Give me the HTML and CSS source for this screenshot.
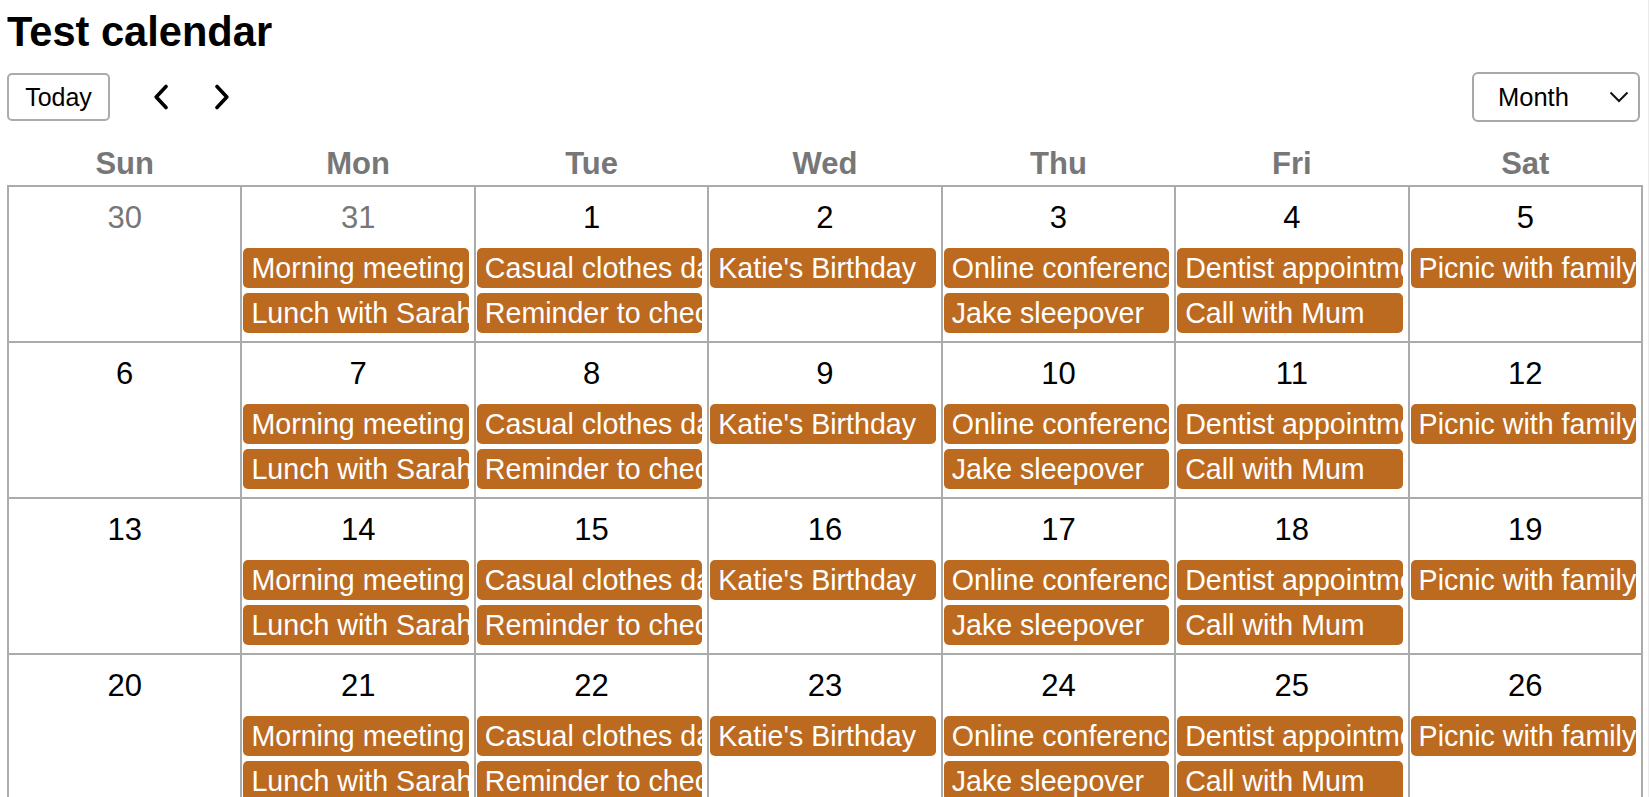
FILE: index.html
```html
<!DOCTYPE html>
<html lang="en">
<head>
<meta charset="utf-8">
<title>Test calendar</title>
<link rel="stylesheet" href="styles.css">
</head>
<body>
<div class="page">
  <h1 class="title">Test calendar</h1>
  <div class="toolbar">
    <div class="toolbar-left">
      <button class="today-btn">Today</button>
      <button class="nav-btn nav-prev" aria-label="Previous">
        <svg width="16" height="26" viewBox="0 0 16 26"><path d="M13 2.5 L3.2 13 L13 23.5" fill="none" stroke="#000" stroke-width="3.6" stroke-linecap="round" stroke-linejoin="round"/></svg>
      </button>
      <button class="nav-btn nav-next" aria-label="Next">
        <svg width="16" height="26" viewBox="0 0 16 26"><path d="M3 2.5 L12.8 13 L3 23.5" fill="none" stroke="#000" stroke-width="3.6" stroke-linecap="round" stroke-linejoin="round"/></svg>
      </button>
    </div>
    <div class="view-select">
      <span class="view-label">Month</span>
      <svg class="view-caret" width="20" height="12" viewBox="0 0 20 12"><path d="M1.5 1.5 L10 10 L18.5 1.5" fill="none" stroke="#111" stroke-width="2"/></svg>
    </div>
  </div>

  <div class="weekdays">
    <div class="weekday">Sun</div>
    <div class="weekday">Mon</div>
    <div class="weekday">Tue</div>
    <div class="weekday">Wed</div>
    <div class="weekday">Thu</div>
    <div class="weekday">Fri</div>
    <div class="weekday">Sat</div>
  </div>

  <div class="month">
    <!-- week 1 -->
    <div class="day"><div class="num muted">30</div></div>
    <div class="day"><div class="num muted">31</div><div class="event">Morning meeting</div><div class="event">Lunch with Sarah</div></div>
    <div class="day"><div class="num">1</div><div class="event">Casual clothes day</div><div class="event">Reminder to check emails</div></div>
    <div class="day"><div class="num">2</div><div class="event">Katie's Birthday</div></div>
    <div class="day"><div class="num">3</div><div class="event">Online conference</div><div class="event">Jake sleepover</div></div>
    <div class="day"><div class="num">4</div><div class="event">Dentist appointment</div><div class="event">Call with Mum</div></div>
    <div class="day"><div class="num">5</div><div class="event">Picnic with family</div></div>
    <!-- week 2 -->
    <div class="day"><div class="num">6</div></div>
    <div class="day"><div class="num">7</div><div class="event">Morning meeting</div><div class="event">Lunch with Sarah</div></div>
    <div class="day"><div class="num">8</div><div class="event">Casual clothes day</div><div class="event">Reminder to check emails</div></div>
    <div class="day"><div class="num">9</div><div class="event">Katie's Birthday</div></div>
    <div class="day"><div class="num">10</div><div class="event">Online conference</div><div class="event">Jake sleepover</div></div>
    <div class="day"><div class="num">11</div><div class="event">Dentist appointment</div><div class="event">Call with Mum</div></div>
    <div class="day"><div class="num">12</div><div class="event">Picnic with family</div></div>
    <!-- week 3 -->
    <div class="day"><div class="num">13</div></div>
    <div class="day"><div class="num">14</div><div class="event">Morning meeting</div><div class="event">Lunch with Sarah</div></div>
    <div class="day"><div class="num">15</div><div class="event">Casual clothes day</div><div class="event">Reminder to check emails</div></div>
    <div class="day"><div class="num">16</div><div class="event">Katie's Birthday</div></div>
    <div class="day"><div class="num">17</div><div class="event">Online conference</div><div class="event">Jake sleepover</div></div>
    <div class="day"><div class="num">18</div><div class="event">Dentist appointment</div><div class="event">Call with Mum</div></div>
    <div class="day"><div class="num">19</div><div class="event">Picnic with family</div></div>
    <!-- week 4 -->
    <div class="day"><div class="num">20</div></div>
    <div class="day"><div class="num">21</div><div class="event">Morning meeting</div><div class="event">Lunch with Sarah</div></div>
    <div class="day"><div class="num">22</div><div class="event">Casual clothes day</div><div class="event">Reminder to check emails</div></div>
    <div class="day"><div class="num">23</div><div class="event">Katie's Birthday</div></div>
    <div class="day"><div class="num">24</div><div class="event">Online conference</div><div class="event">Jake sleepover</div></div>
    <div class="day"><div class="num">25</div><div class="event">Dentist appointment</div><div class="event">Call with Mum</div></div>
    <div class="day"><div class="num">26</div><div class="event">Picnic with family</div></div>
    <!-- week 5 -->
    <div class="day"><div class="num">27</div></div>
    <div class="day"><div class="num">28</div><div class="event">Morning meeting</div><div class="event">Lunch with Sarah</div></div>
    <div class="day"><div class="num">29</div><div class="event">Casual clothes day</div><div class="event">Reminder to check emails</div></div>
    <div class="day"><div class="num">30</div><div class="event">Katie's Birthday</div></div>
    <div class="day"><div class="num">31</div><div class="event">Online conference</div><div class="event">Jake sleepover</div></div>
    <div class="day"><div class="num muted">1</div><div class="event">Dentist appointment</div><div class="event">Call with Mum</div></div>
    <div class="day"><div class="num muted">2</div><div class="event">Picnic with family</div></div>
  </div>
</div>
</body>
</html>
```

FILE: styles.css
```css
html {
  overflow: hidden;
}

body {
  margin: 0;
  background: #fff;
  color: #000;
  font-family: "Liberation Sans", Arial, sans-serif;
}

body::after {
  content: "";
  position: fixed;
  top: 0;
  bottom: 0;
  right: 2px;
  width: 1px;
  background: #ebebeb;
}

.page {
  padding: 8px 8px 0 7px;
}

.title {
  margin: 0;
  font-size: 41.6px;
  line-height: 48px;
  font-weight: bold;
}

.toolbar {
  margin-top: 16px;
  height: 50px;
  display: flex;
  align-items: center;
  justify-content: space-between;
}

.toolbar-left {
  display: flex;
  align-items: center;
}

.today-btn {
  box-sizing: border-box;
  width: 103px;
  height: 48px;
  padding: 0;
  background: #fff;
  border: 2px solid #ababab;
  border-radius: 5px;
  font-family: "Liberation Sans", Arial, sans-serif;
  font-size: 25px;
  color: #000;
}

.nav-btn {
  width: 44px;
  height: 44px;
  padding: 0;
  border: 0;
  background: transparent;
  display: flex;
  align-items: center;
  justify-content: center;
}

.nav-prev {
  margin-left: 29px;
}

.nav-next {
  margin-left: 17px;
}

.view-select {
  box-sizing: border-box;
  width: 168px;
  height: 50px;
  margin-right: 3px;
  border: 2px solid #a8a8a8;
  border-radius: 6px;
  display: flex;
  align-items: center;
  justify-content: space-between;
  padding: 0 9px 0 24px;
  font-size: 25.5px;
}

.view-caret {
  display: block;
}

.weekdays {
  margin-top: 24px;
  display: grid;
  grid-template-columns: repeat(7, 1fr);
  gap: 2px;
  padding: 0 2px;
}

.weekday {
  text-align: center;
  font-size: 31px;
  font-weight: bold;
  line-height: 36px;
  color: #777;
}

.month {
  margin-top: 3px;
  display: grid;
  grid-template-columns: repeat(7, 1fr);
  gap: 2px;
  padding: 2px;
  background: #ababab;
}

.day {
  background: #fff;
  height: 154px;
  min-width: 0;
  overflow: hidden;
}

.num {
  height: 61px;
  line-height: 61px;
  text-align: center;
  font-size: 31px;
  color: #000;
}

.num.muted {
  color: #777;
}

.event {
  height: 40px;
  line-height: 40px;
  margin: 0 5px 5px 1px;
  padding-left: 8px;
  border-radius: 5px;
  background: #bd6a21;
  color: #fff;
  font-size: 28.6px;
  white-space: nowrap;
  overflow: hidden;
}
```
